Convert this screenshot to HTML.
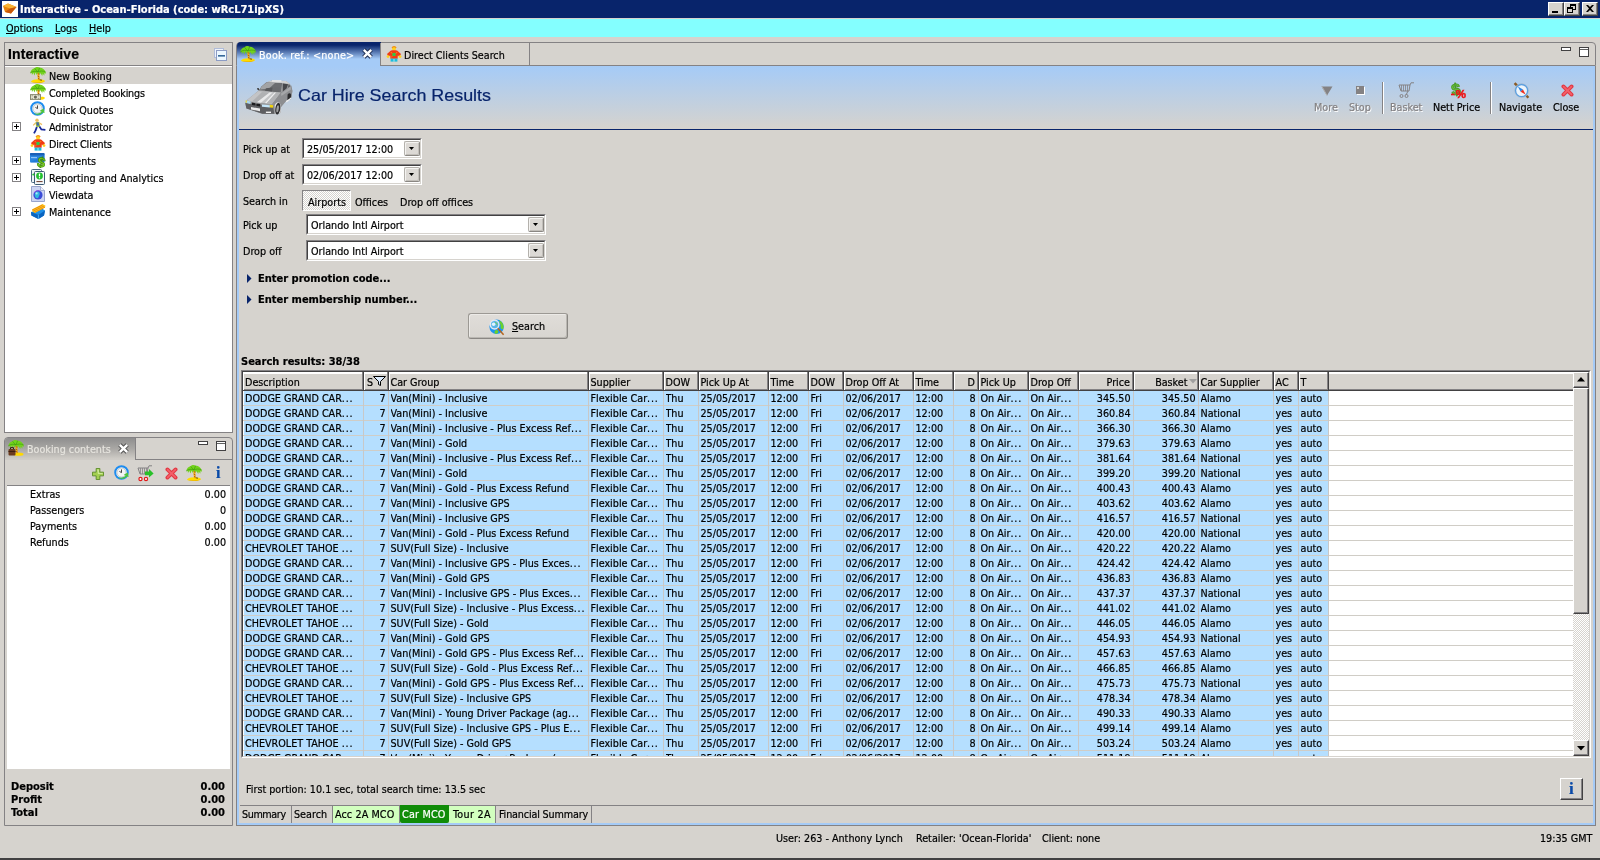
<!DOCTYPE html>
<html lang="en">
<head>
<meta charset="utf-8">
<title>Interactive - Ocean-Florida</title>
<style>
*{box-sizing:border-box;margin:0;padding:0}
html,body{width:1600px;height:860px;overflow:hidden;background:#d6d3ce}
body{font-family:"DejaVu Sans Condensed","Liberation Sans",sans-serif;font-size:10.7px;color:#000;line-height:13px;position:relative;will-change:transform;-webkit-text-stroke:.2px currentColor}
.a{position:absolute;white-space:nowrap}
b,.b{font-weight:bold;font-size:11px}
i{font-style:normal}
#title{left:0;top:0;width:1600px;height:18px;background:#08246b}
#title .t{left:20px;top:3px;color:#fff;font-weight:bold;font-size:11px;line-height:13px}
.wb{top:2px;width:16px;height:14px;background:#d6d3ce;border:1px solid;border-color:#fff #424142 #424142 #fff;box-shadow:inset -1px -1px 0 #848284}
#menu{left:0;top:19px;width:1600px;height:18px;background:#84ffff}
#menu span{top:3px}
.panel{border:1px solid #848284;background:#d6d3ce}
.white{background:#fff}
.plus{left:7px;width:9px;height:9px;border:1px solid #848284;background:#fff}
.plus:before{content:"";position:absolute;left:1px;top:3px;width:5px;height:1px;background:#000}
.plus:after{content:"";position:absolute;left:3px;top:1px;width:1px;height:5px;background:#000}
.sunk{border:1px solid;border-color:#848284 #fff #fff #848284;background:#fff}
.sunk:before{content:"";position:absolute;left:0;top:0;right:0;bottom:0;border:1px solid;border-color:#424142 #d6d3ce #d6d3ce #424142}
.btn{background:#d6d3ce;border:1px solid;border-color:#fff #424142 #424142 #fff;box-shadow:inset -1px -1px 0 #848284,inset 1px 1px 0 #d6d3ce}
.dd{width:16px;height:15px;background:#dcd9d5;border:1px solid;border-color:#b4b1ac #8a8783 #8a8783 #b4b1ac;border-radius:2px;box-shadow:inset 1px 1px 0 #f4f3f1,inset -1px -1px 0 #c2bfba}
.dd:after{content:"";position:absolute;left:4px;top:5px;width:5px;height:3px;background:#000;clip-path:polygon(0 0,100% 0,50% 100%)}
.dis{color:#848284;text-shadow:1px 1px 0 #fff}
.tbl{font-size:10.7px}
.hc{top:0;height:18px;border-right:1px solid #424142;box-shadow:inset -1px 0 0 #848284,inset 1px 0 0 #fff;line-height:13px;padding:4px 0 0 2px;overflow:hidden}
.row{left:0;height:15px;width:1086px;background:linear-gradient(90deg,#fff 1px,#b5dfff 1px)}
.row span{top:0;height:14px;line-height:13px;padding-top:1px;overflow:hidden;position:absolute;white-space:nowrap}
.r{text-align:right}
.e{letter-spacing:.8px}
.vl{top:0;width:1px;background:#c8c8c8}
.bt{top:0;height:17px;border-right:1px solid #848284;padding:2px 0 0 3px;line-height:13px}
</style>
</head>
<body>
<div id="title" class="a">
<svg class="a" style="left:2px;top:1px" width="16" height="16" viewBox="0 0 16 16"><rect width="16" height="16" fill="#fff"/><path d="M1 5 L6 2.5 L14.5 6 L9 12.5 L3 11 Z" fill="#e8820c"/><path d="M1 5 L6 2.5 L14.5 6 L8 7.5 Z" fill="#f9b233"/><path d="M3 11 L9 12.5 L14.5 6 L8 7.5 Z" fill="#c8560a"/></svg>
<span class="a t">Interactive - Ocean-Florida (code: wRcL71ipXS)</span>
<div class="a wb" style="left:1548px"><i class="a" style="left:3px;top:8px;width:6px;height:2px;background:#000"></i></div>
<div class="a wb" style="left:1564px"><i class="a" style="left:5px;top:1px;width:6px;height:6px;border:1px solid #000;border-top-width:2px"></i><i class="a" style="left:2px;top:4px;width:6px;height:6px;border:1px solid #000;border-top-width:2px;background:#d6d3ce"></i></div>
<div class="a wb" style="left:1582px"><svg class="a" style="left:3px;top:2px" width="8" height="7" viewBox="0 0 8 7"><path d="M0 0h2l2 2 2-2h2L5 3.5 8 7H6L4 5 2 7H0l3-3.5z" fill="#000"/></svg></div>
</div>
<div id="menu" class="a"><span class="a" style="left:6px"><u>O</u>ptions</span><span class="a" style="left:55px"><u>L</u>ogs</span><span class="a" style="left:89px"><u>H</u>elp</span></div>
<div id="nav" class="a panel" style="left:4px;top:42px;width:229px;height:391px">
<div class="a" style="left:3px;top:3px;font-family:'Liberation Sans',sans-serif;font-weight:bold;font-size:14px;line-height:16px;letter-spacing:.1px">Interactive</div>
<svg class="a" style="left:209px;top:5px" width="13" height="13" viewBox="0 0 13 13"><rect x="0.5" y="0.5" width="9" height="9" fill="#eef2fa" stroke="#b0bcd8"/><rect x="2.5" y="2.5" width="10" height="10" fill="#ecf7ff" stroke="#8c9cc4"/><rect x="4" y="7.2" width="7" height="1.3" fill="#0a4682"/></svg>
<div class="a" style="left:0;top:22px;width:227px;height:1px;background:#848284"></div>
<div class="a white" style="left:0;top:23px;width:227px;height:366px"></div>
<div class="a" style="left:0;top:24px;width:227px;height:17px;background:#d6d3ce"></div>
<svg class="a" style="left:25px;top:24px" width="16" height="16" viewBox="0 0 16 16"><path d="M1 14.6C2 12.6 6 12 8.4 12.2 11 12 14.4 12.8 15 14 14.6 15.6 11 16 8 16 5 16 1.6 15.8 1 14.6Z" fill="#ffdc00"/><path d="M1.4 15C4 16.2 12 16.2 14.8 14.6 12 15.4 4 15.6 1.4 15Z" fill="#e6a400"/><path d="M9.6 12.8L12 13.2" stroke="#5a3a10" stroke-width=".9"/><path d="M7.4 3.5C7.2 7 7.6 10 8 13.2H9.8C9.4 10 9.2 7 9.6 4Z" fill="#f2b40a"/><path d="M7.6 6.4L9.4 7.4M7.8 9L9.4 10M8 11.4L9.6 12.2" stroke="#b4560e" stroke-width="1"/><path d="M0.3 6C0.6 3.4 2.6 1.6 4.6 1.3 5.6 0 8.4-.3 9.6.7 12 .4 14.6 2 15.6 5L15.9 7 14.6 5.8 14.2 8.8 12.8 6.6 12.2 9 10.6 6.2 9.6 7.2 8 5 6.8 8 5.6 5.6 4.4 8.6 3.4 5.8 2 8 1.6 5.6Z" fill="#72d21c"/><path d="M4.6 1.3C5.6 2.6 6.6 3.6 8 5M9.6.7C9 2.2 8.6 3.4 8 5M15.6 5C12.6 3.6 10.4 3.8 8 5M.3 6C2.6 4 5.4 3.8 8 5" stroke="#3f9e10" stroke-width=".7" fill="none"/></svg>
<span class="a" style="left:44px;top:27px">New Booking</span>
<svg class="a" style="left:25px;top:41px" width="16" height="16" viewBox="0 0 16 16"><path d="M9 13.4C11 12.4 14.6 12.8 15 14 14.6 15.6 11 16 9 15.8Z" fill="#ffdc00"/><path d="M7.4 3.5C7.2 7 7.6 10 8 13.2H9.8C9.4 10 9.2 7 9.6 4Z" fill="#f2b40a"/><path d="M7.6 6.4L9.4 7.4M7.8 9L9.4 10M8 11.4L9.6 12.2" stroke="#b4560e" stroke-width="1"/><path d="M0.3 6C0.6 3.4 2.6 1.6 4.6 1.3 5.6 0 8.4-.3 9.6.7 12 .4 14.6 2 15.6 5L15.9 7 14.6 5.8 14.2 8.8 12.8 6.6 12.2 9 10.6 6.2 9.6 7.2 8 5 6.8 8 5.6 5.6 4.4 8.6 3.4 5.8 2 8 1.6 5.6Z" fill="#72d21c"/><path d="M4.6 1.3C5.6 2.6 6.6 3.6 8 5M9.6.7C9 2.2 8.6 3.4 8 5M15.6 5C12.6 3.6 10.4 3.8 8 5M.3 6C2.6 4 5.4 3.8 8 5" stroke="#3f9e10" stroke-width=".7" fill="none"/><rect x="0.5" y="10.6" width="10" height="5" fill="#e4e4d2" stroke="#8a8a70" stroke-width="1"/><circle cx="5.4" cy="13.1" r="1.6" fill="#6a6a58"/><path d="M1.6 11.8H3M7.8 11.8H9.4M1.6 14.4H3M7.8 14.4H9.4" stroke="#8a8a70" stroke-width=".8"/></svg>
<span class="a" style="left:44px;top:44px;letter-spacing:-0.2px">Completed Bookings</span>
<svg class="a" style="left:25px;top:58px" width="16" height="16" viewBox="0 0 16 16"><circle cx="7.5" cy="7.5" r="6.3" fill="#fff" stroke="#1e8cf0" stroke-width="2"/><circle cx="7.5" cy="7.5" r="4.6" fill="#f4f4f4" stroke="#9aa" stroke-width="0.6"/><path d="M7.5 4.4V7.6L5.4 6.4" stroke="#333" stroke-width="0.9" fill="none"/><path d="M4 12.2C6.5 14.6 10.5 14.4 12.6 11.4L14.6 12 13.8 7.4 9.8 9.8 11.6 10.6C10 12.6 7 13.2 4 12.2Z" fill="#4ec43a"/></svg>
<span class="a" style="left:44px;top:61px">Quick Quotes</span>
<svg class="a" style="left:25px;top:75px" width="16" height="16" viewBox="0 0 16 16"><circle cx="7" cy="2.2" r="1.7" fill="#f0c060"/><path d="M5.4 4.2L9.2 3.8 10.2 8.6 6.4 9.4Z" fill="#9cc43c"/><path d="M6.2 4.4L8.6 4.2 9.2 7.4 7 7.8Z" fill="#4466aa"/><path d="M5.6 5L3.2 7.4" stroke="#f0c060" stroke-width="1.3"/><path d="M9.4 5L12 6.6" stroke="#f0c060" stroke-width="1.3"/><path d="M6.8 9L5.6 12.4 4 15.4" stroke="#1a2a9a" stroke-width="1.8" fill="none"/><path d="M9.4 8.6L11.4 11.4 15.4 11.8" stroke="#1a2a9a" stroke-width="1.8" fill="none"/></svg>
<span class="a" style="left:44px;top:78px;letter-spacing:-0.17px">Administrator</span>
<i class="a plus" style="top:79px"></i>
<svg class="a" style="left:25px;top:92px" width="16" height="16" viewBox="0 0 16 16"><ellipse cx="8" cy="2.7" rx="2" ry="2.1" fill="#ffd21e"/><path d="M6 2C6.8 .2 9.4 .2 10.2 2" stroke="#f08c14" stroke-width="1.1" fill="none"/><path d="M4.6 4.8C6 4.2 10 4.2 11.4 4.8L15 8 13.6 10.6 11.8 9.4 11.6 12.8H4.4L4.2 9.4 2.4 10.6 1 8Z" fill="#f03c14"/><circle cx="2" cy="10.6" r="1.4" fill="#ffd21e"/><circle cx="14" cy="10.6" r="1.4" fill="#ffd21e"/><rect x="6.4" y="7" width="3.2" height="3" fill="#30c848"/><path d="M5 6.2L6 7.4M11 6.2L10 7.4M5.4 11L6.4 10.2" stroke="#ffb428" stroke-width=".8"/><rect x="4.6" y="12.6" width="6.8" height="3" fill="#1cbcdc"/><path d="M8 13V15.6" stroke="#e8fcff" stroke-width=".7"/></svg>
<span class="a" style="left:44px;top:95px;letter-spacing:-0.12px">Direct Clients</span>
<svg class="a" style="left:25px;top:109px" width="16" height="16" viewBox="0 0 16 16"><rect x="0" y="1" width="14.5" height="9.6" rx="1" fill="#2a86e0"/><rect x="0" y="1" width="14.5" height="2.6" rx="1" fill="#1860b8"/><rect x="1" y="5" width="6" height="1.2" fill="#8cc4f8"/><path d="M0 10.6L14.5 3V10.6Z" fill="#1a70d0" opacity=".5"/><text x="11.3" y="15.2" font-family="Liberation Sans,sans-serif" font-weight="bold" font-size="14" text-anchor="middle" fill="#7ed321" stroke="#3f8a08" stroke-width="0.7" transform="rotate(12 11 10)">$</text></svg>
<span class="a" style="left:44px;top:112px">Payments</span>
<i class="a plus" style="top:113px"></i>
<svg class="a" style="left:25px;top:126px" width="16" height="16" viewBox="0 0 16 16"><rect x="1.5" y="0.5" width="10" height="13" rx="1" fill="#eef3f6" stroke="#4a6a82" stroke-width="1"/><rect x="4.5" y="2.5" width="10" height="13" rx="1" fill="#f4f8fa" stroke="#3c5a74" stroke-width="1"/><circle cx="9.5" cy="7" r="3.4" fill="#22c02e"/><path d="M9.5 4.6V7.4" stroke="#fff" stroke-width="1.3"/><circle cx="9.5" cy="8.8" r="0.7" fill="#fff"/><path d="M6.4 12.6H12.6" stroke="#6a3a2a" stroke-width="1"/><path d="M2.6 6.2C3.4 4.6 4 4.6 4 6.6" stroke="#22c02e" stroke-width="1.2" fill="none"/></svg>
<span class="a" style="left:44px;top:129px">Reporting and Analytics</span>
<i class="a plus" style="top:130px"></i>
<svg class="a" style="left:25px;top:143px" width="16" height="16" viewBox="0 0 16 16"><path d="M1.5 0.5H10.5L14.5 4.5V15.5H1.5Z" fill="#ccd4f2" stroke="#98a4cc" stroke-width="1"/><path d="M10.5 0.5V4.5H14.5" fill="#eef0fb" stroke="#98a4cc" stroke-width="0.8"/><circle cx="8" cy="9" r="4.6" fill="#3a4cd8"/><path d="M5.4 6.4C7 5 9 5.4 9.6 7 10.2 8.6 9 9.4 8.6 11 8.2 12.4 6.6 12.6 5.6 11.4 4.6 10 4.4 7.6 5.4 6.4Z" fill="#30b8e0"/><path d="M4 7C5 5 7.6 4.2 9.6 4.8" stroke="#8a4ae0" stroke-width="1" fill="none"/><circle cx="6.6" cy="7.4" r="1.1" fill="#c8f0ff" opacity=".8"/></svg>
<span class="a" style="left:44px;top:146px">Viewdata</span>
<svg class="a" style="left:25px;top:160px" width="16" height="16" viewBox="0 0 16 16"><path d="M1 9L12 5.4 15 7.6 14 12.4 8.4 16 1.4 12.4Z" fill="#1e90e8"/><path d="M1 9L8.4 12 15 7.6 14 12.4 8.4 16 1.4 12.4Z" fill="#0a64c0"/><path d="M2 6.4L12.4 1 15.4 2.6 15 4.4 5 10 2.4 8.6Z" fill="#ffc820"/><path d="M2.2 7L12.6 2" stroke="#e88a10" stroke-width="0.9"/><path d="M3 8.2L14 3" stroke="#e88a10" stroke-width="0.9"/><path d="M4.2 9.4L15 4.2" stroke="#e88a10" stroke-width="0.9"/><path d="M8.4 12L8.4 16" stroke="#60c0ff" stroke-width="0.8"/></svg>
<span class="a" style="left:44px;top:163px">Maintenance</span>
<i class="a plus" style="top:164px"></i>
</div>
<div id="bc" class="a" style="left:4px;top:437px;width:229px;height:389px;border:1px solid #848284;border-radius:4px 4px 0 0;background:#d6d3ce">
<div class="a" style="left:0;top:0;width:130px;height:22px;border-radius:3px 0 0 0;background:linear-gradient(#8e8e8e,#aaa8a5 50%,#cfccc7 95%)"></div>
<div class="a" style="left:130px;top:0;width:1px;height:22px;background:#848284"></div><div class="a" style="left:130px;top:21px;width:97px;height:1px;background:#848284"></div>
<svg class="a" style="left:3px;top:2px" width="16" height="16" viewBox="0 0 16 16"><ellipse cx="10.5" cy="14.2" rx="5" ry="1.6" fill="#ffd800"/><path d="M7.4 3.5C7.2 7 7.6 10 8 13.2H9.8C9.4 10 9.2 7 9.6 4Z" fill="#f2b40a"/><path d="M7.6 6.4L9.4 7.4M7.8 9L9.4 10M8 11.4L9.6 12.2" stroke="#b4560e" stroke-width="1"/><path d="M0.3 6C0.6 3.4 2.6 1.6 4.6 1.3 5.6 0 8.4-.3 9.6.7 12 .4 14.6 2 15.6 5L15.9 7 14.6 5.8 14.2 8.8 12.8 6.6 12.2 9 10.6 6.2 9.6 7.2 8 5 6.8 8 5.6 5.6 4.4 8.6 3.4 5.8 2 8 1.6 5.6Z" fill="#72d21c"/><path d="M4.6 1.3C5.6 2.6 6.6 3.6 8 5M9.6.7C9 2.2 8.6 3.4 8 5M15.6 5C12.6 3.6 10.4 3.8 8 5M.3 6C2.6 4 5.4 3.8 8 5" stroke="#3f9e10" stroke-width=".7" fill="none"/><rect x="0.5" y="9" width="7" height="6.5" rx="1" fill="#6b3a1e"/><path d="M2.5 9V7.6h3V9" stroke="#3c1e0e" fill="none" stroke-width="1"/><rect x="0.5" y="11" width="7" height="1" fill="#3c1e0e"/></svg>
<span class="a" style="left:22px;top:5px;color:#e6e4de">Booking contents</span>
<svg class="a" style="left:113px;top:5px" width="11" height="11" viewBox="0 0 11 11"><path d="M1.8 1.8L9.2 9.2M9.2 1.8L1.8 9.2" stroke="#505050" stroke-width="4.4"/><path d="M1.8 1.8L9.2 9.2M9.2 1.8L1.8 9.2" stroke="#fff" stroke-width="2.4"/></svg>
<i class="a" style="left:193px;top:3px;width:10px;height:4px;border:1px solid #424142;background:#fff"></i>
<i class="a" style="left:211px;top:3px;width:10px;height:10px;border:1px solid #424142;background:linear-gradient(#fff 1px,#606060 1px,#606060 2px,#fff 2px)"></i>
<svg class="a" style="left:87px;top:30px" width="12" height="12" viewBox="0 0 13 13"><path d="M4.5 0.5h4v4h4v4h-4v4h-4v-4h-4v-4h4z" fill="#a4d050" stroke="#5c8c28"/><path d="M5.5 1.5h2v4h4v1h-5z" fill="#cfe89a"/></svg>
<svg class="a" style="left:109px;top:27px" width="16" height="16" viewBox="0 0 16 16"><circle cx="7.5" cy="7.5" r="6.3" fill="#fff" stroke="#1e8cf0" stroke-width="2"/><circle cx="7.5" cy="7.5" r="4.6" fill="#f4f4f4" stroke="#9aa" stroke-width="0.6"/><path d="M7.5 4.4V7.6L5.4 6.4" stroke="#333" stroke-width="0.9" fill="none"/><path d="M4 12.2C6.5 14.6 10.5 14.4 12.6 11.4L14.6 12 13.8 7.4 9.8 9.8 11.6 10.6C10 12.6 7 13.2 4 12.2Z" fill="#4ec43a"/></svg>
<svg class="a" style="left:132px;top:27px" width="17" height="17" viewBox="0 0 17 17"><path d="M1 3H11L10 9H3ZM11 3L12 0.8H15" fill="none" stroke="#848284" stroke-width="1"/><path d="M3.5 3V9M5.5 3V9M7.5 3V9M9.5 3V9" stroke="#848284" stroke-width=".8"/><circle cx="3.5" cy="14" r="1.6" fill="#fff" stroke="#e01818" stroke-width="1.2"/><circle cx="9" cy="14" r="1.6" fill="#fff" stroke="#e01818" stroke-width="1.2"/><path d="M8 6.4H12V4L16.6 8.4 12 12.6V10.2H8Z" fill="#28c028"/></svg>
<svg class="a" style="left:160px;top:29px" width="13" height="13" viewBox="0 0 13 13"><path d="M2.4 2.4L10.6 10.6M10.6 2.4L2.4 10.6" stroke="#e23a44" stroke-width="3.8" stroke-linecap="round"/><path d="M2.6 2.6L10.4 10.4M10.4 2.6L2.6 10.4" stroke="#f4606a" stroke-width="1.6" stroke-linecap="round"/></svg>
<svg class="a" style="left:181px;top:27px" width="16" height="16" viewBox="0 0 16 16"><path d="M1 14.6C2 12.6 6 12 8.4 12.2 11 12 14.4 12.8 15 14 14.6 15.6 11 16 8 16 5 16 1.6 15.8 1 14.6Z" fill="#ffdc00"/><path d="M1.4 15C4 16.2 12 16.2 14.8 14.6 12 15.4 4 15.6 1.4 15Z" fill="#e6a400"/><path d="M9.6 12.8L12 13.2" stroke="#5a3a10" stroke-width=".9"/><path d="M7.4 3.5C7.2 7 7.6 10 8 13.2H9.8C9.4 10 9.2 7 9.6 4Z" fill="#f2b40a"/><path d="M7.6 6.4L9.4 7.4M7.8 9L9.4 10M8 11.4L9.6 12.2" stroke="#b4560e" stroke-width="1"/><path d="M0.3 6C0.6 3.4 2.6 1.6 4.6 1.3 5.6 0 8.4-.3 9.6.7 12 .4 14.6 2 15.6 5L15.9 7 14.6 5.8 14.2 8.8 12.8 6.6 12.2 9 10.6 6.2 9.6 7.2 8 5 6.8 8 5.6 5.6 4.4 8.6 3.4 5.8 2 8 1.6 5.6Z" fill="#72d21c"/><path d="M4.6 1.3C5.6 2.6 6.6 3.6 8 5M9.6.7C9 2.2 8.6 3.4 8 5M15.6 5C12.6 3.6 10.4 3.8 8 5M.3 6C2.6 4 5.4 3.8 8 5" stroke="#3f9e10" stroke-width=".7" fill="none"/></svg>
<span class="a" style="left:211px;top:25px;font-family:'Liberation Serif',serif;font-weight:bold;font-size:16px;line-height:20px;color:#0a4aa8">i</span>
<div class="a" style="left:2px;top:47px;width:223px;height:1px;background:#848284"></div>
<div class="a white" style="left:2px;top:48px;width:223px;height:283px"></div>
<span class="a" style="left:25px;top:50px">Extras</span><span class="a" style="right:6px;top:50px">0.00</span>
<span class="a" style="left:25px;top:66px">Passengers</span><span class="a" style="right:6px;top:66px">0</span>
<span class="a" style="left:25px;top:82px">Payments</span><span class="a" style="right:6px;top:82px">0.00</span>
<span class="a" style="left:25px;top:98px">Refunds</span><span class="a" style="right:6px;top:98px">0.00</span>
<b class="a" style="left:6px;top:342px">Deposit</b><b class="a" style="right:7px;top:342px">0.00</b>
<b class="a" style="left:6px;top:355px">Profit</b><b class="a" style="right:7px;top:355px">0.00</b>
<b class="a" style="left:6px;top:368px">Total</b><b class="a" style="right:7px;top:368px">0.00</b>
</div>
<div id="main" class="a" style="left:236px;top:42px;width:1360px;height:784px">
<div class="a" style="left:0;top:0;width:1360px;height:24px;border:1px solid #848284;border-radius:4px 4px 0 0;background:#d6d3ce"></div>
<div class="a" style="left:0;top:24px;width:1360px;height:760px;border:1px solid #848284;border-top:0;background:#a5cbf7"></div>
<div class="a" style="left:3px;top:24px;width:1354px;height:757px;background:#d6d3ce"></div>
<div class="a" style="left:1px;top:0;width:144px;height:24px;border-radius:4px 0 0 0;background:linear-gradient(#08246b 0,#08246b 3px,#a5cbf7 17px,#a5cbf7)"></div>
<svg class="a" style="left:4px;top:4px" width="16" height="16" viewBox="0 0 16 16"><path d="M1 14.6C2 12.6 6 12 8.4 12.2 11 12 14.4 12.8 15 14 14.6 15.6 11 16 8 16 5 16 1.6 15.8 1 14.6Z" fill="#ffdc00"/><path d="M1.4 15C4 16.2 12 16.2 14.8 14.6 12 15.4 4 15.6 1.4 15Z" fill="#e6a400"/><path d="M9.6 12.8L12 13.2" stroke="#5a3a10" stroke-width=".9"/><path d="M7.4 3.5C7.2 7 7.6 10 8 13.2H9.8C9.4 10 9.2 7 9.6 4Z" fill="#f2b40a"/><path d="M7.6 6.4L9.4 7.4M7.8 9L9.4 10M8 11.4L9.6 12.2" stroke="#b4560e" stroke-width="1"/><path d="M0.3 6C0.6 3.4 2.6 1.6 4.6 1.3 5.6 0 8.4-.3 9.6.7 12 .4 14.6 2 15.6 5L15.9 7 14.6 5.8 14.2 8.8 12.8 6.6 12.2 9 10.6 6.2 9.6 7.2 8 5 6.8 8 5.6 5.6 4.4 8.6 3.4 5.8 2 8 1.6 5.6Z" fill="#72d21c"/><path d="M4.6 1.3C5.6 2.6 6.6 3.6 8 5M9.6.7C9 2.2 8.6 3.4 8 5M15.6 5C12.6 3.6 10.4 3.8 8 5M.3 6C2.6 4 5.4 3.8 8 5" stroke="#3f9e10" stroke-width=".7" fill="none"/></svg>
<span class="a" style="left:23px;top:7px;color:#fff;letter-spacing:.2px">Book. ref.: &lt;none&gt;</span>
<svg class="a" style="left:126px;top:6px" width="11" height="11" viewBox="0 0 11 11"><path d="M1.8 1.8L9.2 9.2M9.2 1.8L1.8 9.2" stroke="#1c2c50" stroke-width="4.4"/><path d="M1.8 1.8L9.2 9.2M9.2 1.8L1.8 9.2" stroke="#fff" stroke-width="2.4"/></svg>
<div class="a" style="left:144px;top:1px;width:1px;height:23px;background:#848284"></div>
<div class="a" style="left:293px;top:1px;width:1px;height:22px;background:#848284"></div>
<svg class="a" style="left:150px;top:4px" width="16" height="16" viewBox="0 0 16 16"><ellipse cx="8" cy="2.7" rx="2" ry="2.1" fill="#ffd21e"/><path d="M6 2C6.8 .2 9.4 .2 10.2 2" stroke="#f08c14" stroke-width="1.1" fill="none"/><path d="M4.6 4.8C6 4.2 10 4.2 11.4 4.8L15 8 13.6 10.6 11.8 9.4 11.6 12.8H4.4L4.2 9.4 2.4 10.6 1 8Z" fill="#f03c14"/><circle cx="2" cy="10.6" r="1.4" fill="#ffd21e"/><circle cx="14" cy="10.6" r="1.4" fill="#ffd21e"/><rect x="6.4" y="7" width="3.2" height="3" fill="#30c848"/><path d="M5 6.2L6 7.4M11 6.2L10 7.4M5.4 11L6.4 10.2" stroke="#ffb428" stroke-width=".8"/><rect x="4.6" y="12.6" width="6.8" height="3" fill="#1cbcdc"/><path d="M8 13V15.6" stroke="#e8fcff" stroke-width=".7"/></svg>
<span class="a" style="left:168px;top:7px">Direct Clients Search</span>
<i class="a" style="left:1325px;top:5px;width:10px;height:4px;border:1px solid #424142;background:#fff"></i>
<i class="a" style="left:1343px;top:5px;width:10px;height:10px;border:1px solid #424142;background:linear-gradient(#fff 1px,#606060 1px,#606060 2px,#fff 2px)"></i>
<div class="a" style="left:3px;top:24px;width:1354px;height:63px;background:linear-gradient(#a5cbf7,#d6d3ce)"></div>
<div class="a" style="left:3px;top:87px;width:1354px;height:1px;background:#08246b"></div>
<svg class="a" style="left:9px;top:38px" width="48" height="35" viewBox="0 0 48 35"><path d="M13 11L21 2.4 27 .6 41 1 45 4 46.6 8 47.4 11 46.4 17.4 41 21 36 27 35.4 33 29.4 34 17.4 34 1.4 28.4 .2 23 2 20Z" fill="#9a9b9d"/><path d="M21.2 2.4L27 .6 41 1 45 4 37.4 3.2Z" fill="#cfd0d1"/><path d="M27 .3H36.4V1.5H27Z" fill="#f2f2f2"/><path d="M16.4 6.6L21.2 2.6 37.2 3.1 35.6 12.4 14.3 10Z" fill="#6c6d70"/><path d="M16.6 6.6L21.4 2.8 30 3 24 8.6 15 9.6Z" fill="#a2a3a5"/><path d="M21 8.2L27.6 7.6 27 11.4 20 10.8Z" fill="#58595c"/><path d="M28.8 7.6L34.6 7.4 34 12 28.2 11.6Z" fill="#6a6b6e"/><path d="M37.8 3.6L43.1 4.2 41.5 8.4 37.8 12Z" fill="#454649"/><path d="M43.6 4.6L45.6 6 44.6 9.4 42.4 9.4Z" fill="#5a5b5e"/><path d="M13.2 11.1L35.6 12.7 27.1 24 6.8 21.8 1.9 20.2Z" fill="#c3c4c6"/><path d="M17 12L24.6 12.4 12 22.2 7 21.6Z" fill="#b0b1b3"/><path d="M24.6 12.4L27.6 12.6 16 22.8 12 22.2Z" fill="#e9e9ea"/><path d="M35.4 12.8L27.2 23.8 21.4 23.2 31 12.6Z" fill="#b2b3b5"/><path d="M29.6 12.6L31 12.6 21.4 23.2 20 23Z" fill="#f0f0f0"/><path d="M35.6 12.7L46.4 5.4 47.4 11 46.4 17.4 41 21 36 27 35.4 33 33 33.6 28.2 26.1 27.1 24Z" fill="#8d8e91"/><path d="M36 13.4L45.6 6.6 46 9.4 36.4 16Z" fill="#a6a7a9"/><path d="M.3 22.9L28.2 26.1 29.2 33.8 17.5 33.8 1.4 28.4Z" fill="#5e5f62"/><path d="M.9 20.2L5.7 21.4 5.4 24 .7 22.8Z" fill="#a8d8f0"/><path d="M.7 20.2L2 20.4 1.8 22.8 .5 22.6Z" fill="#e6d23c"/><path d="M16.9 24.5L24.9 25.2 24.9 27.6 16.9 26.8Z" fill="#c4e6fa"/><path d="M24.9 24.8L28.2 25.2 28 27.8 24.9 27.6Z" fill="#f2d40c"/><path d="M6.8 22.6L10.6 23.2 10.4 25.6 7 25Z" fill="#1c1c1e"/><path d="M11.4 23.4L15.3 24 15.1 26.4 11.4 25.8Z" fill="#1c1c1e"/><path d="M6 27L15 28.6 15 31.2 6 29.4Z" fill="#ececec"/><path d="M20.9 31.6H26V33H20.9Z" fill="#f4f4f4"/><path d="M29.6 26C30.6 21.6 35.6 20.4 35.8 27L35.4 33 30.4 33.6Z" fill="#e4e4e5"/><ellipse cx="32.8" cy="28.6" rx="2.5" ry="6" fill="#2c2c2e" transform="rotate(8 32.8 28.6)"/><ellipse cx="32.6" cy="28.8" rx="1.2" ry="3.6" fill="#9c9d9f" transform="rotate(8 32.6 28.8)"/><path d="M42.6 14.6C44 12.6 46.6 12.6 46 16.6L45.4 19.4 42.4 20.4Z" fill="#2c2c2e"/><path d="M41 21L46 17.6 46 19 41.4 22.4Z" fill="#f0f0f0"/><path d="M12 8L14 8.2 14.2 10.2 12.6 10Z" fill="#3c3c3e"/></svg>
<span class="a" style="left:62px;top:43px;font-family:'Liberation Sans',sans-serif;font-size:16.5px;line-height:20px;color:#08246b;transform:scaleX(1.085);transform-origin:0 0">Car Hire Search Results</span>
<svg class="a" style="left:1085px;top:44px" width="12" height="10" viewBox="0 0 12 10"><path d="M0.5 0.5H11.5L6 9.5Z" fill="#848284"/><path d="M1 0.5L6 9.5" stroke="#b0b0b0" stroke-width="1"/></svg>
<span class="a dis" style="left:1078px;top:59px">More</span>
<i class="a" style="left:1120px;top:44px;width:8px;height:8px;background:#848284;box-shadow:1px 1px 0 #fff"></i><i class="a" style="left:1121px;top:45px;width:2px;height:2px;background:#d6d3ce"></i>
<span class="a dis" style="left:1113px;top:59px">Stop</span>
<i class="a" style="left:1146px;top:40px;width:2px;height:32px;border-left:1px solid #848284;border-right:1px solid #fff"></i>
<svg class="a" style="left:1162px;top:40px" width="17" height="17" viewBox="0 0 17 17"><path d="M1 3H12L11 9H3ZM12 3L13 0.8H16" fill="none" stroke="#848284" stroke-width="1"/><path d="M3.5 3V9M5.5 3V9M7.5 3V9M9.5 3V9" stroke="#848284" stroke-width=".8"/><path d="M10 9L8 13" stroke="#848284" stroke-width="1"/><circle cx="3.5" cy="14" r="1.5" fill="none" stroke="#848284" stroke-width="1"/><circle cx="8.5" cy="14" r="1.5" fill="none" stroke="#848284" stroke-width="1"/></svg>
<span class="a dis" style="left:1154px;top:59px">Basket</span>
<svg class="a" style="left:1214px;top:40px" width="17" height="17" viewBox="0 0 17 17"><text x="6" y="13" font-family="Liberation Sans,sans-serif" font-weight="bold" font-size="16" text-anchor="middle" fill="#6cc43c" stroke="#4a9a28" stroke-width=".9" transform="rotate(-8 6 8)">$</text><text x="10.8" y="15.6" font-family="Liberation Sans,sans-serif" font-weight="bold" font-size="11.5" text-anchor="middle" fill="#ee1414" stroke="#ee1414" stroke-width=".5">%</text><rect x="1" y="11.6" width="3.6" height="1.7" fill="#ee1414"/></svg>
<span class="a" style="left:1197px;top:59px">Nett Price</span>
<i class="a" style="left:1254px;top:40px;width:2px;height:32px;border-left:1px solid #848284;border-right:1px solid #fff"></i>
<svg class="a" style="left:1277px;top:40px" width="17" height="17" viewBox="0 0 17 17"><path d="M1.6 1.2L4.6 4.2M12.6 12.8L15.4 15.8" stroke="#8a5a24" stroke-width="2.4"/><circle cx="8.6" cy="8.6" r="6.2" fill="#eef4fa" stroke="#5a9ee0" stroke-width="1.6"/><circle cx="8.6" cy="8.6" r="7.1" fill="none" stroke="#b8c4d0" stroke-width=".6"/><path d="M4.8 4.4L10 7.4 7.6 9.8Z" fill="#2a86e6"/><path d="M12.6 12.6L7.6 9.8 10 7.4Z" fill="#ee2c1c"/></svg>
<span class="a" style="left:1263px;top:59px">Navigate</span>
<svg class="a" style="left:1325px;top:42px" width="13" height="13" viewBox="0 0 13 13"><path d="M2.4 2.4L10.6 10.6M10.6 2.4L2.4 10.6" stroke="#e23a44" stroke-width="3.8" stroke-linecap="round"/><path d="M2.6 2.6L10.4 10.4M10.4 2.6L2.6 10.4" stroke="#f4606a" stroke-width="1.6" stroke-linecap="round"/></svg>
<span class="a" style="left:1317px;top:59px">Close</span>
<span class="a" style="left:7px;top:101px">Pick up at</span>
<div class="a sunk" style="left:66px;top:96px;width:120px;height:21px"><span class="a" style="left:4px;top:4px">25/05/2017 12:00</span><i class="a dd" style="left:101px;top:2px"></i></div>
<span class="a" style="left:7px;top:127px">Drop off at</span>
<div class="a sunk" style="left:66px;top:122px;width:120px;height:21px"><span class="a" style="left:4px;top:4px">02/06/2017 12:00</span><i class="a dd" style="left:101px;top:2px"></i></div>
<span class="a" style="left:7px;top:153px">Search in</span>
<div class="a" style="left:66px;top:148px;width:49px;height:21px;border:1px solid;border-color:#848284 #fff #fff #848284;background:repeating-conic-gradient(#fff 0 25%,#d6d3ce 0 50%) 0 0/2px 2px"><span class="a" style="left:5px;top:5px">Airports</span></div>
<span class="a" style="left:119px;top:154px">Offices</span><span class="a" style="left:164px;top:154px">Drop off offices</span>
<span class="a" style="left:7px;top:177px">Pick up</span>
<div class="a sunk" style="left:70px;top:172px;width:240px;height:21px"><span class="a" style="left:4px;top:4px">Orlando Intl Airport</span><i class="a dd" style="left:221px;top:2px"></i></div>
<span class="a" style="left:7px;top:203px">Drop off</span>
<div class="a sunk" style="left:70px;top:198px;width:240px;height:21px"><span class="a" style="left:4px;top:4px">Orlando Intl Airport</span><i class="a dd" style="left:221px;top:2px"></i></div>
<svg class="a" style="left:11px;top:232px" width="5" height="9" viewBox="0 0 5 9"><path d="M0 0L4.5 4.5 0 9Z" fill="#08246b"/></svg><b class="a" style="left:22px;top:230px">Enter promotion code...</b>
<svg class="a" style="left:11px;top:253px" width="5" height="9" viewBox="0 0 5 9"><path d="M0 0L4.5 4.5 0 9Z" fill="#08246b"/></svg><b class="a" style="left:22px;top:251px">Enter membership number...</b>
<div class="a" style="left:232px;top:271px;width:100px;height:26px;border:1px solid;border-color:#9c9994 #8a8783 #8a8783 #9c9994;border-radius:3px;background:linear-gradient(#e0ddd9,#d8d5d0);box-shadow:inset 1px 1px 0 #eceae7,inset -1px -1px 0 #bab7b2"><svg class="a" style="left:19px;top:4px" width="18" height="18" viewBox="0 0 18 18"><circle cx="8.6" cy="8.8" r="7.2" fill="#1e96f0"/><path d="M11 2.4C14.6 3.6 16.4 7.4 15.2 11 13.6 11.6 12.2 10.2 12.6 8.2 13 6.4 11.6 5 11 2.4ZM7.6 12.2C9 11.6 10.4 12.6 10.2 14.2 9.6 15.6 8 16 6.8 15.4 6.4 14 6.6 12.8 7.6 12.2Z" fill="#6cd22a"/><circle cx="6.6" cy="6.6" r="4.4" fill="#d8ecf8" stroke="#e8e8f0" stroke-width="1.3"/><circle cx="6.6" cy="6.6" r="3.6" fill="#58b4e8"/><circle cx="5.6" cy="6.2" r="1.8" fill="#dff4ff"/><path d="M7 4.4C8.4 4.6 9.4 5.8 9.2 7.4" stroke="#7ad04a" stroke-width="1" fill="none"/><path d="M9.8 10.2L15.6 16.8" stroke="#b4641e" stroke-width="1.5"/></svg><span class="a" style="left:43px;top:6px"><u>S</u>earch</span></div>
<b class="a" style="left:5px;top:313px">Search results: 38/38</b>
<div class="a sunk tbl" style="left:5px;top:328px;width:1350px;height:388px">
<div class="a" style="left:1px;top:1px;width:1330px;height:384px;overflow:hidden;background:#fff">
<div class="a" style="left:0;top:0;width:1330px;height:19px;background:#d6d3ce;border-bottom:1px solid #424142;box-shadow:inset 0 -1px 0 #848284,inset 0 2px 0 #fff"></div>
<div class="a hc" style="left:0px;width:121px">Description</div>
<div class="a hc" style="left:121px;width:25px;padding-left:3px">S</div>
<div class="a hc" style="left:146px;width:200px;padding-left:1.5px">Car Group</div>
<div class="a hc" style="left:346px;width:75px;padding-left:1.5px">Supplier</div>
<div class="a hc" style="left:421px;width:35px;padding-left:1.5px">DOW</div>
<div class="a hc" style="left:456px;width:70px;padding-left:1.5px">Pick Up At</div>
<div class="a hc" style="left:526px;width:40px;padding-left:1.5px">Time</div>
<div class="a hc" style="left:566px;width:35px;padding-left:1.5px">DOW</div>
<div class="a hc" style="left:601px;width:70px;padding-left:1.5px">Drop Off At</div>
<div class="a hc" style="left:671px;width:40px;padding-left:1.5px">Time</div>
<div class="a hc" style="left:711px;width:25px;text-align:right;padding-right:3px">D</div>
<div class="a hc" style="left:736px;width:50px;padding-left:1.5px">Pick Up</div>
<div class="a hc" style="left:786px;width:50px;padding-left:1.5px">Drop Off</div>
<div class="a hc" style="left:836px;width:55px;text-align:right;padding-right:3px">Price</div>
<div class="a hc" style="left:891px;width:65px;text-align:right;padding-right:10.5px">Basket</div>
<div class="a hc" style="left:956px;width:75px;padding-left:1.5px">Car Supplier</div>
<div class="a hc" style="left:1031px;width:25px;padding-left:1.5px">AC</div>
<div class="a hc" style="left:1056px;width:30px;padding-left:1.5px">T</div>
<svg class="a" style="left:130px;top:4px" width="13" height="10" viewBox="0 0 13 10"><path d="M0.5 0.5H12.5L7.5 5.5V9.5L5.5 8.5V5.5Z" fill="#dcecff" stroke="#000" stroke-width="1"/></svg>
<svg class="a" style="left:946px;top:7px" width="8" height="5" viewBox="0 0 8 5"><path d="M0 0H8L4 4.5Z" fill="#a0a0a0"/></svg>
<div class="a row" style="top:19px"><span style="left:2px;width:118px">DODGE GRAND CAR<i class="e">...</i></span><span class="r" style="left:121px;width:21.5px">7</span><span style="left:147.5px;width:197.5px">Van(Mini) - Inclusive</span><span style="left:347.5px;width:72.5px">Flexible Car<i class="e">...</i></span><span style="left:422.5px;width:32.5px">Thu</span><span style="left:457.5px;width:67.5px">25/05/2017</span><span style="left:527.5px;width:37.5px">12:00</span><span style="left:567.5px;width:32.5px">Fri</span><span style="left:602.5px;width:67.5px">02/06/2017</span><span style="left:672.5px;width:37.5px">12:00</span><span class="r" style="left:711px;width:21.5px">8</span><span style="left:737.5px;width:47.5px">On Air<i class="e">...</i></span><span style="left:787.5px;width:47.5px">On Air<i class="e">...</i></span><span class="r" style="left:836px;width:51.5px">345.50</span><span class="r" style="left:891px;width:61.5px">345.50</span><span style="left:957.5px;width:72.5px">Alamo</span><span style="left:1032.5px;width:22.5px">yes</span><span style="left:1057.5px;width:27.5px">auto</span></div>
<div class="a" style="left:0;top:33px;width:1330px;height:1px;background:#d0cdc6"></div>
<div class="a row" style="top:34px"><span style="left:2px;width:118px">DODGE GRAND CAR<i class="e">...</i></span><span class="r" style="left:121px;width:21.5px">7</span><span style="left:147.5px;width:197.5px">Van(Mini) - Inclusive</span><span style="left:347.5px;width:72.5px">Flexible Car<i class="e">...</i></span><span style="left:422.5px;width:32.5px">Thu</span><span style="left:457.5px;width:67.5px">25/05/2017</span><span style="left:527.5px;width:37.5px">12:00</span><span style="left:567.5px;width:32.5px">Fri</span><span style="left:602.5px;width:67.5px">02/06/2017</span><span style="left:672.5px;width:37.5px">12:00</span><span class="r" style="left:711px;width:21.5px">8</span><span style="left:737.5px;width:47.5px">On Air<i class="e">...</i></span><span style="left:787.5px;width:47.5px">On Air<i class="e">...</i></span><span class="r" style="left:836px;width:51.5px">360.84</span><span class="r" style="left:891px;width:61.5px">360.84</span><span style="left:957.5px;width:72.5px">National</span><span style="left:1032.5px;width:22.5px">yes</span><span style="left:1057.5px;width:27.5px">auto</span></div>
<div class="a" style="left:0;top:48px;width:1330px;height:1px;background:#d0cdc6"></div>
<div class="a row" style="top:49px"><span style="left:2px;width:118px">DODGE GRAND CAR<i class="e">...</i></span><span class="r" style="left:121px;width:21.5px">7</span><span style="left:147.5px;width:197.5px">Van(Mini) - Inclusive - Plus Excess Ref<i class="e">...</i></span><span style="left:347.5px;width:72.5px">Flexible Car<i class="e">...</i></span><span style="left:422.5px;width:32.5px">Thu</span><span style="left:457.5px;width:67.5px">25/05/2017</span><span style="left:527.5px;width:37.5px">12:00</span><span style="left:567.5px;width:32.5px">Fri</span><span style="left:602.5px;width:67.5px">02/06/2017</span><span style="left:672.5px;width:37.5px">12:00</span><span class="r" style="left:711px;width:21.5px">8</span><span style="left:737.5px;width:47.5px">On Air<i class="e">...</i></span><span style="left:787.5px;width:47.5px">On Air<i class="e">...</i></span><span class="r" style="left:836px;width:51.5px">366.30</span><span class="r" style="left:891px;width:61.5px">366.30</span><span style="left:957.5px;width:72.5px">Alamo</span><span style="left:1032.5px;width:22.5px">yes</span><span style="left:1057.5px;width:27.5px">auto</span></div>
<div class="a" style="left:0;top:63px;width:1330px;height:1px;background:#d0cdc6"></div>
<div class="a row" style="top:64px"><span style="left:2px;width:118px">DODGE GRAND CAR<i class="e">...</i></span><span class="r" style="left:121px;width:21.5px">7</span><span style="left:147.5px;width:197.5px">Van(Mini) - Gold</span><span style="left:347.5px;width:72.5px">Flexible Car<i class="e">...</i></span><span style="left:422.5px;width:32.5px">Thu</span><span style="left:457.5px;width:67.5px">25/05/2017</span><span style="left:527.5px;width:37.5px">12:00</span><span style="left:567.5px;width:32.5px">Fri</span><span style="left:602.5px;width:67.5px">02/06/2017</span><span style="left:672.5px;width:37.5px">12:00</span><span class="r" style="left:711px;width:21.5px">8</span><span style="left:737.5px;width:47.5px">On Air<i class="e">...</i></span><span style="left:787.5px;width:47.5px">On Air<i class="e">...</i></span><span class="r" style="left:836px;width:51.5px">379.63</span><span class="r" style="left:891px;width:61.5px">379.63</span><span style="left:957.5px;width:72.5px">Alamo</span><span style="left:1032.5px;width:22.5px">yes</span><span style="left:1057.5px;width:27.5px">auto</span></div>
<div class="a" style="left:0;top:78px;width:1330px;height:1px;background:#d0cdc6"></div>
<div class="a row" style="top:79px"><span style="left:2px;width:118px">DODGE GRAND CAR<i class="e">...</i></span><span class="r" style="left:121px;width:21.5px">7</span><span style="left:147.5px;width:197.5px">Van(Mini) - Inclusive - Plus Excess Ref<i class="e">...</i></span><span style="left:347.5px;width:72.5px">Flexible Car<i class="e">...</i></span><span style="left:422.5px;width:32.5px">Thu</span><span style="left:457.5px;width:67.5px">25/05/2017</span><span style="left:527.5px;width:37.5px">12:00</span><span style="left:567.5px;width:32.5px">Fri</span><span style="left:602.5px;width:67.5px">02/06/2017</span><span style="left:672.5px;width:37.5px">12:00</span><span class="r" style="left:711px;width:21.5px">8</span><span style="left:737.5px;width:47.5px">On Air<i class="e">...</i></span><span style="left:787.5px;width:47.5px">On Air<i class="e">...</i></span><span class="r" style="left:836px;width:51.5px">381.64</span><span class="r" style="left:891px;width:61.5px">381.64</span><span style="left:957.5px;width:72.5px">National</span><span style="left:1032.5px;width:22.5px">yes</span><span style="left:1057.5px;width:27.5px">auto</span></div>
<div class="a" style="left:0;top:93px;width:1330px;height:1px;background:#d0cdc6"></div>
<div class="a row" style="top:94px"><span style="left:2px;width:118px">DODGE GRAND CAR<i class="e">...</i></span><span class="r" style="left:121px;width:21.5px">7</span><span style="left:147.5px;width:197.5px">Van(Mini) - Gold</span><span style="left:347.5px;width:72.5px">Flexible Car<i class="e">...</i></span><span style="left:422.5px;width:32.5px">Thu</span><span style="left:457.5px;width:67.5px">25/05/2017</span><span style="left:527.5px;width:37.5px">12:00</span><span style="left:567.5px;width:32.5px">Fri</span><span style="left:602.5px;width:67.5px">02/06/2017</span><span style="left:672.5px;width:37.5px">12:00</span><span class="r" style="left:711px;width:21.5px">8</span><span style="left:737.5px;width:47.5px">On Air<i class="e">...</i></span><span style="left:787.5px;width:47.5px">On Air<i class="e">...</i></span><span class="r" style="left:836px;width:51.5px">399.20</span><span class="r" style="left:891px;width:61.5px">399.20</span><span style="left:957.5px;width:72.5px">National</span><span style="left:1032.5px;width:22.5px">yes</span><span style="left:1057.5px;width:27.5px">auto</span></div>
<div class="a" style="left:0;top:108px;width:1330px;height:1px;background:#d0cdc6"></div>
<div class="a row" style="top:109px"><span style="left:2px;width:118px">DODGE GRAND CAR<i class="e">...</i></span><span class="r" style="left:121px;width:21.5px">7</span><span style="left:147.5px;width:197.5px">Van(Mini) - Gold - Plus Excess Refund</span><span style="left:347.5px;width:72.5px">Flexible Car<i class="e">...</i></span><span style="left:422.5px;width:32.5px">Thu</span><span style="left:457.5px;width:67.5px">25/05/2017</span><span style="left:527.5px;width:37.5px">12:00</span><span style="left:567.5px;width:32.5px">Fri</span><span style="left:602.5px;width:67.5px">02/06/2017</span><span style="left:672.5px;width:37.5px">12:00</span><span class="r" style="left:711px;width:21.5px">8</span><span style="left:737.5px;width:47.5px">On Air<i class="e">...</i></span><span style="left:787.5px;width:47.5px">On Air<i class="e">...</i></span><span class="r" style="left:836px;width:51.5px">400.43</span><span class="r" style="left:891px;width:61.5px">400.43</span><span style="left:957.5px;width:72.5px">Alamo</span><span style="left:1032.5px;width:22.5px">yes</span><span style="left:1057.5px;width:27.5px">auto</span></div>
<div class="a" style="left:0;top:123px;width:1330px;height:1px;background:#d0cdc6"></div>
<div class="a row" style="top:124px"><span style="left:2px;width:118px">DODGE GRAND CAR<i class="e">...</i></span><span class="r" style="left:121px;width:21.5px">7</span><span style="left:147.5px;width:197.5px">Van(Mini) - Inclusive GPS</span><span style="left:347.5px;width:72.5px">Flexible Car<i class="e">...</i></span><span style="left:422.5px;width:32.5px">Thu</span><span style="left:457.5px;width:67.5px">25/05/2017</span><span style="left:527.5px;width:37.5px">12:00</span><span style="left:567.5px;width:32.5px">Fri</span><span style="left:602.5px;width:67.5px">02/06/2017</span><span style="left:672.5px;width:37.5px">12:00</span><span class="r" style="left:711px;width:21.5px">8</span><span style="left:737.5px;width:47.5px">On Air<i class="e">...</i></span><span style="left:787.5px;width:47.5px">On Air<i class="e">...</i></span><span class="r" style="left:836px;width:51.5px">403.62</span><span class="r" style="left:891px;width:61.5px">403.62</span><span style="left:957.5px;width:72.5px">Alamo</span><span style="left:1032.5px;width:22.5px">yes</span><span style="left:1057.5px;width:27.5px">auto</span></div>
<div class="a" style="left:0;top:138px;width:1330px;height:1px;background:#d0cdc6"></div>
<div class="a row" style="top:139px"><span style="left:2px;width:118px">DODGE GRAND CAR<i class="e">...</i></span><span class="r" style="left:121px;width:21.5px">7</span><span style="left:147.5px;width:197.5px">Van(Mini) - Inclusive GPS</span><span style="left:347.5px;width:72.5px">Flexible Car<i class="e">...</i></span><span style="left:422.5px;width:32.5px">Thu</span><span style="left:457.5px;width:67.5px">25/05/2017</span><span style="left:527.5px;width:37.5px">12:00</span><span style="left:567.5px;width:32.5px">Fri</span><span style="left:602.5px;width:67.5px">02/06/2017</span><span style="left:672.5px;width:37.5px">12:00</span><span class="r" style="left:711px;width:21.5px">8</span><span style="left:737.5px;width:47.5px">On Air<i class="e">...</i></span><span style="left:787.5px;width:47.5px">On Air<i class="e">...</i></span><span class="r" style="left:836px;width:51.5px">416.57</span><span class="r" style="left:891px;width:61.5px">416.57</span><span style="left:957.5px;width:72.5px">National</span><span style="left:1032.5px;width:22.5px">yes</span><span style="left:1057.5px;width:27.5px">auto</span></div>
<div class="a" style="left:0;top:153px;width:1330px;height:1px;background:#d0cdc6"></div>
<div class="a row" style="top:154px"><span style="left:2px;width:118px">DODGE GRAND CAR<i class="e">...</i></span><span class="r" style="left:121px;width:21.5px">7</span><span style="left:147.5px;width:197.5px">Van(Mini) - Gold - Plus Excess Refund</span><span style="left:347.5px;width:72.5px">Flexible Car<i class="e">...</i></span><span style="left:422.5px;width:32.5px">Thu</span><span style="left:457.5px;width:67.5px">25/05/2017</span><span style="left:527.5px;width:37.5px">12:00</span><span style="left:567.5px;width:32.5px">Fri</span><span style="left:602.5px;width:67.5px">02/06/2017</span><span style="left:672.5px;width:37.5px">12:00</span><span class="r" style="left:711px;width:21.5px">8</span><span style="left:737.5px;width:47.5px">On Air<i class="e">...</i></span><span style="left:787.5px;width:47.5px">On Air<i class="e">...</i></span><span class="r" style="left:836px;width:51.5px">420.00</span><span class="r" style="left:891px;width:61.5px">420.00</span><span style="left:957.5px;width:72.5px">National</span><span style="left:1032.5px;width:22.5px">yes</span><span style="left:1057.5px;width:27.5px">auto</span></div>
<div class="a" style="left:0;top:168px;width:1330px;height:1px;background:#d0cdc6"></div>
<div class="a row" style="top:169px"><span style="left:2px;width:118px">CHEVROLET TAHOE <i class="e">...</i></span><span class="r" style="left:121px;width:21.5px">7</span><span style="left:147.5px;width:197.5px">SUV(Full Size) - Inclusive</span><span style="left:347.5px;width:72.5px">Flexible Car<i class="e">...</i></span><span style="left:422.5px;width:32.5px">Thu</span><span style="left:457.5px;width:67.5px">25/05/2017</span><span style="left:527.5px;width:37.5px">12:00</span><span style="left:567.5px;width:32.5px">Fri</span><span style="left:602.5px;width:67.5px">02/06/2017</span><span style="left:672.5px;width:37.5px">12:00</span><span class="r" style="left:711px;width:21.5px">8</span><span style="left:737.5px;width:47.5px">On Air<i class="e">...</i></span><span style="left:787.5px;width:47.5px">On Air<i class="e">...</i></span><span class="r" style="left:836px;width:51.5px">420.22</span><span class="r" style="left:891px;width:61.5px">420.22</span><span style="left:957.5px;width:72.5px">Alamo</span><span style="left:1032.5px;width:22.5px">yes</span><span style="left:1057.5px;width:27.5px">auto</span></div>
<div class="a" style="left:0;top:183px;width:1330px;height:1px;background:#d0cdc6"></div>
<div class="a row" style="top:184px"><span style="left:2px;width:118px">DODGE GRAND CAR<i class="e">...</i></span><span class="r" style="left:121px;width:21.5px">7</span><span style="left:147.5px;width:197.5px">Van(Mini) - Inclusive GPS - Plus Exces<i class="e">...</i></span><span style="left:347.5px;width:72.5px">Flexible Car<i class="e">...</i></span><span style="left:422.5px;width:32.5px">Thu</span><span style="left:457.5px;width:67.5px">25/05/2017</span><span style="left:527.5px;width:37.5px">12:00</span><span style="left:567.5px;width:32.5px">Fri</span><span style="left:602.5px;width:67.5px">02/06/2017</span><span style="left:672.5px;width:37.5px">12:00</span><span class="r" style="left:711px;width:21.5px">8</span><span style="left:737.5px;width:47.5px">On Air<i class="e">...</i></span><span style="left:787.5px;width:47.5px">On Air<i class="e">...</i></span><span class="r" style="left:836px;width:51.5px">424.42</span><span class="r" style="left:891px;width:61.5px">424.42</span><span style="left:957.5px;width:72.5px">Alamo</span><span style="left:1032.5px;width:22.5px">yes</span><span style="left:1057.5px;width:27.5px">auto</span></div>
<div class="a" style="left:0;top:198px;width:1330px;height:1px;background:#d0cdc6"></div>
<div class="a row" style="top:199px"><span style="left:2px;width:118px">DODGE GRAND CAR<i class="e">...</i></span><span class="r" style="left:121px;width:21.5px">7</span><span style="left:147.5px;width:197.5px">Van(Mini) - Gold GPS</span><span style="left:347.5px;width:72.5px">Flexible Car<i class="e">...</i></span><span style="left:422.5px;width:32.5px">Thu</span><span style="left:457.5px;width:67.5px">25/05/2017</span><span style="left:527.5px;width:37.5px">12:00</span><span style="left:567.5px;width:32.5px">Fri</span><span style="left:602.5px;width:67.5px">02/06/2017</span><span style="left:672.5px;width:37.5px">12:00</span><span class="r" style="left:711px;width:21.5px">8</span><span style="left:737.5px;width:47.5px">On Air<i class="e">...</i></span><span style="left:787.5px;width:47.5px">On Air<i class="e">...</i></span><span class="r" style="left:836px;width:51.5px">436.83</span><span class="r" style="left:891px;width:61.5px">436.83</span><span style="left:957.5px;width:72.5px">Alamo</span><span style="left:1032.5px;width:22.5px">yes</span><span style="left:1057.5px;width:27.5px">auto</span></div>
<div class="a" style="left:0;top:213px;width:1330px;height:1px;background:#d0cdc6"></div>
<div class="a row" style="top:214px"><span style="left:2px;width:118px">DODGE GRAND CAR<i class="e">...</i></span><span class="r" style="left:121px;width:21.5px">7</span><span style="left:147.5px;width:197.5px">Van(Mini) - Inclusive GPS - Plus Exces<i class="e">...</i></span><span style="left:347.5px;width:72.5px">Flexible Car<i class="e">...</i></span><span style="left:422.5px;width:32.5px">Thu</span><span style="left:457.5px;width:67.5px">25/05/2017</span><span style="left:527.5px;width:37.5px">12:00</span><span style="left:567.5px;width:32.5px">Fri</span><span style="left:602.5px;width:67.5px">02/06/2017</span><span style="left:672.5px;width:37.5px">12:00</span><span class="r" style="left:711px;width:21.5px">8</span><span style="left:737.5px;width:47.5px">On Air<i class="e">...</i></span><span style="left:787.5px;width:47.5px">On Air<i class="e">...</i></span><span class="r" style="left:836px;width:51.5px">437.37</span><span class="r" style="left:891px;width:61.5px">437.37</span><span style="left:957.5px;width:72.5px">National</span><span style="left:1032.5px;width:22.5px">yes</span><span style="left:1057.5px;width:27.5px">auto</span></div>
<div class="a" style="left:0;top:228px;width:1330px;height:1px;background:#d0cdc6"></div>
<div class="a row" style="top:229px"><span style="left:2px;width:118px">CHEVROLET TAHOE <i class="e">...</i></span><span class="r" style="left:121px;width:21.5px">7</span><span style="left:147.5px;width:197.5px">SUV(Full Size) - Inclusive - Plus Excess<i class="e">...</i></span><span style="left:347.5px;width:72.5px">Flexible Car<i class="e">...</i></span><span style="left:422.5px;width:32.5px">Thu</span><span style="left:457.5px;width:67.5px">25/05/2017</span><span style="left:527.5px;width:37.5px">12:00</span><span style="left:567.5px;width:32.5px">Fri</span><span style="left:602.5px;width:67.5px">02/06/2017</span><span style="left:672.5px;width:37.5px">12:00</span><span class="r" style="left:711px;width:21.5px">8</span><span style="left:737.5px;width:47.5px">On Air<i class="e">...</i></span><span style="left:787.5px;width:47.5px">On Air<i class="e">...</i></span><span class="r" style="left:836px;width:51.5px">441.02</span><span class="r" style="left:891px;width:61.5px">441.02</span><span style="left:957.5px;width:72.5px">Alamo</span><span style="left:1032.5px;width:22.5px">yes</span><span style="left:1057.5px;width:27.5px">auto</span></div>
<div class="a" style="left:0;top:243px;width:1330px;height:1px;background:#d0cdc6"></div>
<div class="a row" style="top:244px"><span style="left:2px;width:118px">CHEVROLET TAHOE <i class="e">...</i></span><span class="r" style="left:121px;width:21.5px">7</span><span style="left:147.5px;width:197.5px">SUV(Full Size) - Gold</span><span style="left:347.5px;width:72.5px">Flexible Car<i class="e">...</i></span><span style="left:422.5px;width:32.5px">Thu</span><span style="left:457.5px;width:67.5px">25/05/2017</span><span style="left:527.5px;width:37.5px">12:00</span><span style="left:567.5px;width:32.5px">Fri</span><span style="left:602.5px;width:67.5px">02/06/2017</span><span style="left:672.5px;width:37.5px">12:00</span><span class="r" style="left:711px;width:21.5px">8</span><span style="left:737.5px;width:47.5px">On Air<i class="e">...</i></span><span style="left:787.5px;width:47.5px">On Air<i class="e">...</i></span><span class="r" style="left:836px;width:51.5px">446.05</span><span class="r" style="left:891px;width:61.5px">446.05</span><span style="left:957.5px;width:72.5px">Alamo</span><span style="left:1032.5px;width:22.5px">yes</span><span style="left:1057.5px;width:27.5px">auto</span></div>
<div class="a" style="left:0;top:258px;width:1330px;height:1px;background:#d0cdc6"></div>
<div class="a row" style="top:259px"><span style="left:2px;width:118px">DODGE GRAND CAR<i class="e">...</i></span><span class="r" style="left:121px;width:21.5px">7</span><span style="left:147.5px;width:197.5px">Van(Mini) - Gold GPS</span><span style="left:347.5px;width:72.5px">Flexible Car<i class="e">...</i></span><span style="left:422.5px;width:32.5px">Thu</span><span style="left:457.5px;width:67.5px">25/05/2017</span><span style="left:527.5px;width:37.5px">12:00</span><span style="left:567.5px;width:32.5px">Fri</span><span style="left:602.5px;width:67.5px">02/06/2017</span><span style="left:672.5px;width:37.5px">12:00</span><span class="r" style="left:711px;width:21.5px">8</span><span style="left:737.5px;width:47.5px">On Air<i class="e">...</i></span><span style="left:787.5px;width:47.5px">On Air<i class="e">...</i></span><span class="r" style="left:836px;width:51.5px">454.93</span><span class="r" style="left:891px;width:61.5px">454.93</span><span style="left:957.5px;width:72.5px">National</span><span style="left:1032.5px;width:22.5px">yes</span><span style="left:1057.5px;width:27.5px">auto</span></div>
<div class="a" style="left:0;top:273px;width:1330px;height:1px;background:#d0cdc6"></div>
<div class="a row" style="top:274px"><span style="left:2px;width:118px">DODGE GRAND CAR<i class="e">...</i></span><span class="r" style="left:121px;width:21.5px">7</span><span style="left:147.5px;width:197.5px">Van(Mini) - Gold GPS - Plus Excess Ref<i class="e">...</i></span><span style="left:347.5px;width:72.5px">Flexible Car<i class="e">...</i></span><span style="left:422.5px;width:32.5px">Thu</span><span style="left:457.5px;width:67.5px">25/05/2017</span><span style="left:527.5px;width:37.5px">12:00</span><span style="left:567.5px;width:32.5px">Fri</span><span style="left:602.5px;width:67.5px">02/06/2017</span><span style="left:672.5px;width:37.5px">12:00</span><span class="r" style="left:711px;width:21.5px">8</span><span style="left:737.5px;width:47.5px">On Air<i class="e">...</i></span><span style="left:787.5px;width:47.5px">On Air<i class="e">...</i></span><span class="r" style="left:836px;width:51.5px">457.63</span><span class="r" style="left:891px;width:61.5px">457.63</span><span style="left:957.5px;width:72.5px">Alamo</span><span style="left:1032.5px;width:22.5px">yes</span><span style="left:1057.5px;width:27.5px">auto</span></div>
<div class="a" style="left:0;top:288px;width:1330px;height:1px;background:#d0cdc6"></div>
<div class="a row" style="top:289px"><span style="left:2px;width:118px">CHEVROLET TAHOE <i class="e">...</i></span><span class="r" style="left:121px;width:21.5px">7</span><span style="left:147.5px;width:197.5px">SUV(Full Size) - Gold - Plus Excess Ref<i class="e">...</i></span><span style="left:347.5px;width:72.5px">Flexible Car<i class="e">...</i></span><span style="left:422.5px;width:32.5px">Thu</span><span style="left:457.5px;width:67.5px">25/05/2017</span><span style="left:527.5px;width:37.5px">12:00</span><span style="left:567.5px;width:32.5px">Fri</span><span style="left:602.5px;width:67.5px">02/06/2017</span><span style="left:672.5px;width:37.5px">12:00</span><span class="r" style="left:711px;width:21.5px">8</span><span style="left:737.5px;width:47.5px">On Air<i class="e">...</i></span><span style="left:787.5px;width:47.5px">On Air<i class="e">...</i></span><span class="r" style="left:836px;width:51.5px">466.85</span><span class="r" style="left:891px;width:61.5px">466.85</span><span style="left:957.5px;width:72.5px">Alamo</span><span style="left:1032.5px;width:22.5px">yes</span><span style="left:1057.5px;width:27.5px">auto</span></div>
<div class="a" style="left:0;top:303px;width:1330px;height:1px;background:#d0cdc6"></div>
<div class="a row" style="top:304px"><span style="left:2px;width:118px">DODGE GRAND CAR<i class="e">...</i></span><span class="r" style="left:121px;width:21.5px">7</span><span style="left:147.5px;width:197.5px">Van(Mini) - Gold GPS - Plus Excess Ref<i class="e">...</i></span><span style="left:347.5px;width:72.5px">Flexible Car<i class="e">...</i></span><span style="left:422.5px;width:32.5px">Thu</span><span style="left:457.5px;width:67.5px">25/05/2017</span><span style="left:527.5px;width:37.5px">12:00</span><span style="left:567.5px;width:32.5px">Fri</span><span style="left:602.5px;width:67.5px">02/06/2017</span><span style="left:672.5px;width:37.5px">12:00</span><span class="r" style="left:711px;width:21.5px">8</span><span style="left:737.5px;width:47.5px">On Air<i class="e">...</i></span><span style="left:787.5px;width:47.5px">On Air<i class="e">...</i></span><span class="r" style="left:836px;width:51.5px">475.73</span><span class="r" style="left:891px;width:61.5px">475.73</span><span style="left:957.5px;width:72.5px">National</span><span style="left:1032.5px;width:22.5px">yes</span><span style="left:1057.5px;width:27.5px">auto</span></div>
<div class="a" style="left:0;top:318px;width:1330px;height:1px;background:#d0cdc6"></div>
<div class="a row" style="top:319px"><span style="left:2px;width:118px">CHEVROLET TAHOE <i class="e">...</i></span><span class="r" style="left:121px;width:21.5px">7</span><span style="left:147.5px;width:197.5px">SUV(Full Size) - Inclusive GPS</span><span style="left:347.5px;width:72.5px">Flexible Car<i class="e">...</i></span><span style="left:422.5px;width:32.5px">Thu</span><span style="left:457.5px;width:67.5px">25/05/2017</span><span style="left:527.5px;width:37.5px">12:00</span><span style="left:567.5px;width:32.5px">Fri</span><span style="left:602.5px;width:67.5px">02/06/2017</span><span style="left:672.5px;width:37.5px">12:00</span><span class="r" style="left:711px;width:21.5px">8</span><span style="left:737.5px;width:47.5px">On Air<i class="e">...</i></span><span style="left:787.5px;width:47.5px">On Air<i class="e">...</i></span><span class="r" style="left:836px;width:51.5px">478.34</span><span class="r" style="left:891px;width:61.5px">478.34</span><span style="left:957.5px;width:72.5px">Alamo</span><span style="left:1032.5px;width:22.5px">yes</span><span style="left:1057.5px;width:27.5px">auto</span></div>
<div class="a" style="left:0;top:333px;width:1330px;height:1px;background:#d0cdc6"></div>
<div class="a row" style="top:334px"><span style="left:2px;width:118px">DODGE GRAND CAR<i class="e">...</i></span><span class="r" style="left:121px;width:21.5px">7</span><span style="left:147.5px;width:197.5px">Van(Mini) - Young Driver Package (ag<i class="e">...</i></span><span style="left:347.5px;width:72.5px">Flexible Car<i class="e">...</i></span><span style="left:422.5px;width:32.5px">Thu</span><span style="left:457.5px;width:67.5px">25/05/2017</span><span style="left:527.5px;width:37.5px">12:00</span><span style="left:567.5px;width:32.5px">Fri</span><span style="left:602.5px;width:67.5px">02/06/2017</span><span style="left:672.5px;width:37.5px">12:00</span><span class="r" style="left:711px;width:21.5px">8</span><span style="left:737.5px;width:47.5px">On Air<i class="e">...</i></span><span style="left:787.5px;width:47.5px">On Air<i class="e">...</i></span><span class="r" style="left:836px;width:51.5px">490.33</span><span class="r" style="left:891px;width:61.5px">490.33</span><span style="left:957.5px;width:72.5px">Alamo</span><span style="left:1032.5px;width:22.5px">yes</span><span style="left:1057.5px;width:27.5px">auto</span></div>
<div class="a" style="left:0;top:348px;width:1330px;height:1px;background:#d0cdc6"></div>
<div class="a row" style="top:349px"><span style="left:2px;width:118px">CHEVROLET TAHOE <i class="e">...</i></span><span class="r" style="left:121px;width:21.5px">7</span><span style="left:147.5px;width:197.5px">SUV(Full Size) - Inclusive GPS - Plus E<i class="e">...</i></span><span style="left:347.5px;width:72.5px">Flexible Car<i class="e">...</i></span><span style="left:422.5px;width:32.5px">Thu</span><span style="left:457.5px;width:67.5px">25/05/2017</span><span style="left:527.5px;width:37.5px">12:00</span><span style="left:567.5px;width:32.5px">Fri</span><span style="left:602.5px;width:67.5px">02/06/2017</span><span style="left:672.5px;width:37.5px">12:00</span><span class="r" style="left:711px;width:21.5px">8</span><span style="left:737.5px;width:47.5px">On Air<i class="e">...</i></span><span style="left:787.5px;width:47.5px">On Air<i class="e">...</i></span><span class="r" style="left:836px;width:51.5px">499.14</span><span class="r" style="left:891px;width:61.5px">499.14</span><span style="left:957.5px;width:72.5px">Alamo</span><span style="left:1032.5px;width:22.5px">yes</span><span style="left:1057.5px;width:27.5px">auto</span></div>
<div class="a" style="left:0;top:363px;width:1330px;height:1px;background:#d0cdc6"></div>
<div class="a row" style="top:364px"><span style="left:2px;width:118px">CHEVROLET TAHOE <i class="e">...</i></span><span class="r" style="left:121px;width:21.5px">7</span><span style="left:147.5px;width:197.5px">SUV(Full Size) - Gold GPS</span><span style="left:347.5px;width:72.5px">Flexible Car<i class="e">...</i></span><span style="left:422.5px;width:32.5px">Thu</span><span style="left:457.5px;width:67.5px">25/05/2017</span><span style="left:527.5px;width:37.5px">12:00</span><span style="left:567.5px;width:32.5px">Fri</span><span style="left:602.5px;width:67.5px">02/06/2017</span><span style="left:672.5px;width:37.5px">12:00</span><span class="r" style="left:711px;width:21.5px">8</span><span style="left:737.5px;width:47.5px">On Air<i class="e">...</i></span><span style="left:787.5px;width:47.5px">On Air<i class="e">...</i></span><span class="r" style="left:836px;width:51.5px">503.24</span><span class="r" style="left:891px;width:61.5px">503.24</span><span style="left:957.5px;width:72.5px">Alamo</span><span style="left:1032.5px;width:22.5px">yes</span><span style="left:1057.5px;width:27.5px">auto</span></div>
<div class="a" style="left:0;top:378px;width:1330px;height:1px;background:#d0cdc6"></div>
<div class="a row" style="top:379px"><span style="left:2px;width:118px">DODGE GRAND CAR<i class="e">...</i></span><span class="r" style="left:121px;width:21.5px">7</span><span style="left:147.5px;width:197.5px">Van(Mini) - Young Driver Package (ag<i class="e">...</i></span><span style="left:347.5px;width:72.5px">Flexible Car<i class="e">...</i></span><span style="left:422.5px;width:32.5px">Thu</span><span style="left:457.5px;width:67.5px">25/05/2017</span><span style="left:527.5px;width:37.5px">12:00</span><span style="left:567.5px;width:32.5px">Fri</span><span style="left:602.5px;width:67.5px">02/06/2017</span><span style="left:672.5px;width:37.5px">12:00</span><span class="r" style="left:711px;width:21.5px">8</span><span style="left:737.5px;width:47.5px">On Air<i class="e">...</i></span><span style="left:787.5px;width:47.5px">On Air<i class="e">...</i></span><span class="r" style="left:836px;width:51.5px">511.19</span><span class="r" style="left:891px;width:61.5px">511.19</span><span style="left:957.5px;width:72.5px">Alamo</span><span style="left:1032.5px;width:22.5px">yes</span><span style="left:1057.5px;width:27.5px">auto</span></div>
<div class="a" style="left:0;top:393px;width:1330px;height:1px;background:#d0cdc6"></div>
<div class="a vl" style="left:120px;top:19px;height:365px"></div>
<div class="a vl" style="left:145px;top:19px;height:365px"></div>
<div class="a vl" style="left:345px;top:19px;height:365px"></div>
<div class="a vl" style="left:420px;top:19px;height:365px"></div>
<div class="a vl" style="left:455px;top:19px;height:365px"></div>
<div class="a vl" style="left:525px;top:19px;height:365px"></div>
<div class="a vl" style="left:565px;top:19px;height:365px"></div>
<div class="a vl" style="left:600px;top:19px;height:365px"></div>
<div class="a vl" style="left:670px;top:19px;height:365px"></div>
<div class="a vl" style="left:710px;top:19px;height:365px"></div>
<div class="a vl" style="left:735px;top:19px;height:365px"></div>
<div class="a vl" style="left:785px;top:19px;height:365px"></div>
<div class="a vl" style="left:835px;top:19px;height:365px"></div>
<div class="a vl" style="left:890px;top:19px;height:365px"></div>
<div class="a vl" style="left:955px;top:19px;height:365px"></div>
<div class="a vl" style="left:1030px;top:19px;height:365px"></div>
<div class="a vl" style="left:1055px;top:19px;height:365px"></div>
<div class="a vl" style="left:1085px;top:19px;height:365px"></div>
</div>
<div class="a" style="left:1331px;top:1px;width:16px;height:384px;background:repeating-conic-gradient(#fff 0 25%,#d6d3ce 0 50%) 0 0/2px 2px"></div>
<div class="a btn" style="left:1331px;top:1px;width:16px;height:16px"><svg class="a" style="left:3px;top:4px" width="8" height="5" viewBox="0 0 8 5"><path d="M0 4.5H8L4 0Z" fill="#000"/></svg></div>
<div class="a btn" style="left:1331px;top:17px;width:16px;height:226px"></div>
<div class="a btn" style="left:1331px;top:369px;width:16px;height:16px"><svg class="a" style="left:3px;top:5px" width="8" height="5" viewBox="0 0 8 5"><path d="M0 0H8L4 4.5Z" fill="#000"/></svg></div>
</div>
<span class="a" style="left:10px;top:741px">First portion: 10.1 sec, total search time: 13.5 sec</span>
<div class="a btn" style="left:1324px;top:736px;width:23px;height:22px"><span class="a" style="left:8px;top:0;font-family:'Liberation Serif',serif;font-weight:bold;font-size:17px;line-height:19px;color:#0a4aa8">i</span></div>
<div class="a" style="left:4px;top:763px;width:1353px;height:1px;background:#848284"></div>
<div class="a bt" style="left:3px;top:764px;width:53px;color:#000;letter-spacing:-0.4px;padding-left:3px;">Summary</div>
<div class="a bt" style="left:56px;top:764px;width:41px;color:#000;letter-spacing:0px;padding-left:2px;">Search</div>
<div class="a bt" style="left:97px;top:764px;width:67px;color:#000;letter-spacing:0.1px;padding-left:2px;background:#d2ffbf;">Acc 2A MCO</div>
<div class="a bt" style="left:164px;top:763px;width:49px;color:#fff;letter-spacing:0.2px;padding-left:2px;background:#108c08;border-radius:0 0 2px 2px;border-right:0;height:18px;padding-top:3px;">Car MCO</div>
<div class="a bt" style="left:213px;top:764px;width:47px;color:#000;letter-spacing:0.3px;padding-left:4px;background:#d2ffbf;">Tour 2A</div>
<div class="a bt" style="left:260px;top:764px;width:96px;color:#000;letter-spacing:-0.15px;padding-left:3px;">Financial Summary</div>
</div>
<span class="a" style="left:776px;top:832px">User: 263 - Anthony Lynch</span>
<span class="a" style="left:916px;top:832px">Retailer: 'Ocean-Florida'</span>
<span class="a" style="left:1042px;top:832px">Client: none</span>
<span class="a" style="left:1540px;top:832px">19:35 GMT</span>
<div class="a" style="left:0;top:858px;width:1600px;height:2px;background:#424142"></div>
</body>
</html>
